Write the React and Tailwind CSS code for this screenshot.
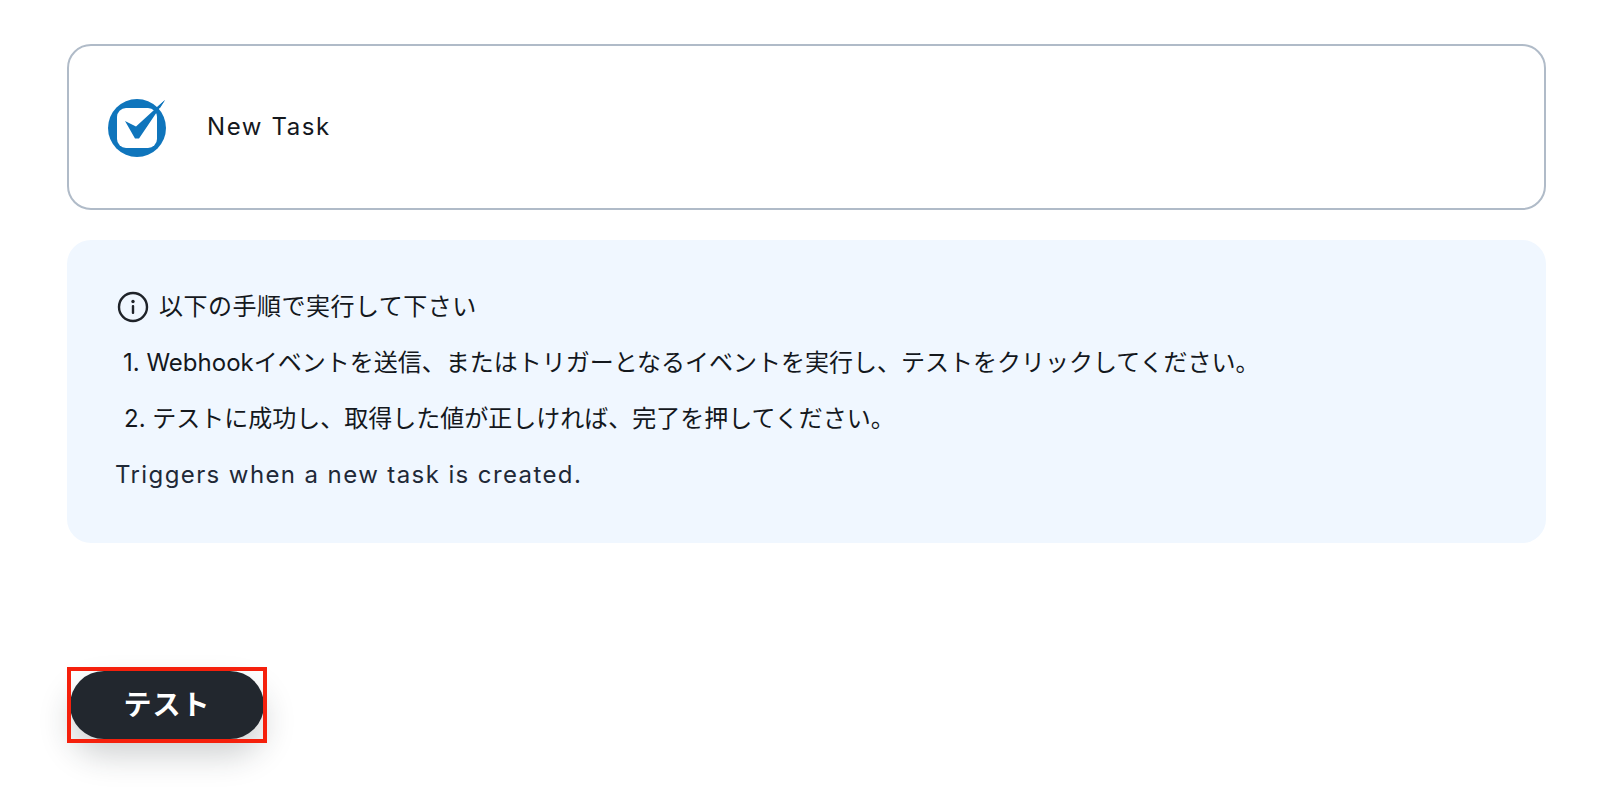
const jp = { fontFamily: 'Inter, "Noto Sans CJK JP", sans-serif' };

const TaskLogo = () => (
  <svg width="60" height="60" viewBox="0 0 60 60" className="shrink-0">
    <circle cx="29" cy="31" r="29" fill="#0f75bc" />
    <rect x="9" y="11" width="40" height="40" rx="9" fill="#fff" />
    <path d="M17 24 L28 29.5 L57 3 L31 41.5 L27 41.5 Z" fill="#0f75bc" />
    <path d="M48 11 L57 3 L52 11 Z" fill="#0f75bc" />
  </svg>
);

const InfoIcon = () => (
  <svg width="32" height="32" viewBox="0 0 32 32" fill="none" className="shrink-0">
    <circle cx="16" cy="16" r="14" stroke="#1f2329" strokeWidth="2.4" />
    <circle cx="16" cy="10.5" r="1.7" fill="#1f2329" />
    <rect x="14.8" y="14" width="2.4" height="9" rx="1" fill="#1f2329" />
  </svg>
);

export default function App() {
  return (
    <div className="w-[1600px] h-[787px] bg-white overflow-hidden pt-[44px] pl-[67px] pr-[54px]" style={jp}>
      <div className="h-[166px] flex items-center pl-[39px] border-2 border-[#b0bbc8] rounded-[24px]">
        <TaskLogo />
        <span className="ml-[39px] text-[24px] tracking-[1.6px] text-[#14181d]">New Task</span>
      </div>

      <div className="mt-[30px] h-[303px] bg-[#f0f7ff] rounded-[24px] pl-[48px] pt-[47px] text-[#14181d]">
        <div className="h-[40px] flex items-center pl-[2px] gap-[10px] text-[24px] tracking-[0.5px]">
          <InfoIcon />
          <span>以下の手順で実行して下さい</span>
        </div>
        <p className="mt-[16px] h-[40px] leading-[40px] pl-[8px] text-[24px]">1. Webhookイベントを送信、またはトリガーとなるイベントを実行し、テストをクリックしてください。</p>
        <p className="mt-[16px] h-[40px] leading-[40px] pl-[9px] text-[24px]">2. テストに成功し、取得した値が正しければ、完了を押してください。</p>
        <p className="mt-[16px] h-[40px] leading-[40px] text-[24px] tracking-[1.4px] text-[#1f2937]">Triggers when a new task is created.</p>
      </div>

      <div className="relative mt-[124px] w-[200px] h-[76px] flex items-center pl-[3px]">
        <button className="w-[194px] h-[68px] rounded-full bg-[#22272e] text-white text-[28px] font-bold tracking-[1px] shadow-[0_16px_32px_rgba(34,39,46,0.22)]">
          テスト
        </button>
        <div className="absolute inset-0 border-[4px] border-[#f5200c]" />
      </div>
    </div>
  );
}
